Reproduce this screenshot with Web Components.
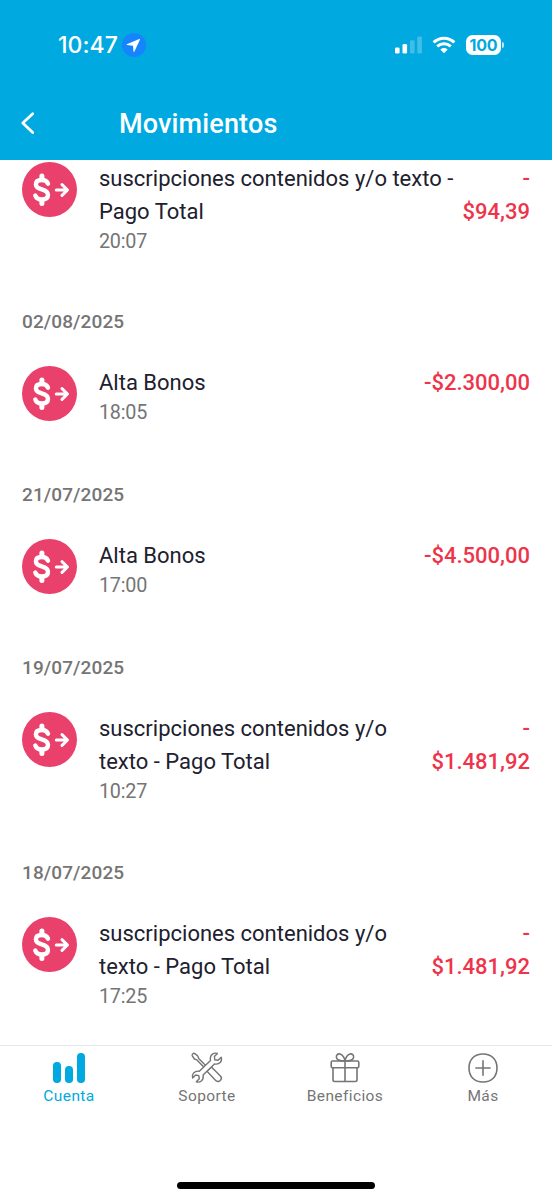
<!DOCTYPE html>
<html lang="es">
<head>
<meta charset="utf-8">
<title>Movimientos</title>
<style>
html,body{margin:0;height:100%;background:#fff}
body{font-family:Roboto,"Liberation Sans",sans-serif}
</style>
</head>
<body>
<app-screen></app-screen>
<script>
const define = (name, html) => customElements.define(name, class extends HTMLElement {
  constructor() {
    super();
    this.attachShadow({mode: 'open'}).innerHTML = html;
  }
});

define('status-bar', `
<style>
:host{display:flex;align-items:center;height:90px;padding:0 48px 0 58px;box-sizing:border-box;color:#fff}
.time{font:500 23px/30px Inter,sans-serif;letter-spacing:.05px;width:64px;white-space:nowrap}
.sp{flex:1}
svg{display:block;flex:none}
.batt{display:flex;align-items:center;margin-left:10px}
.level{width:35px;height:20px;border-radius:6.5px;background:#fff;color:#00a9e0;font:700 16px/20px Inter,sans-serif;letter-spacing:-.2px;text-align:center}
.cap{width:2px;height:6px;border-radius:0 2px 2px 0;background:#b5e5f6;margin-left:1px}
</style>
<span class="time">10:47</span>
<svg width="24" height="24" viewBox="0 0 24 24"><circle cx="12" cy="12" r="12" fill="#1684fc"/><path d="M17.2 6 4.8 11.2q-.7.5.2.7l6 .8.5 5.9q.3.9.8.1L17.9 6.7q.2-.9-.7-.7Z" fill="#fff"/></svg>
<span class="sp"></span>
<svg width="28" height="18" viewBox="0 0 28 18" fill="#fff"><rect x="0" y="11.5" width="4.6" height="6" rx="1.3"/><rect x="7.5" y="8" width="4.6" height="9.5" rx="1.3"/><g opacity=".25"><rect x="15" y="4.3" width="4.6" height="13.2" rx="1.3"/><rect x="22.3" y=".5" width="4.6" height="17" rx="1.3"/></g></svg>
<svg style="margin-left:9px" width="24" height="18" viewBox="0 0 24 18" fill="none" stroke="#fff" stroke-width="3"><path d="M1.6 6.4Q6.2 2.2 12 2.2T22.4 6.4"/><path d="M5.2 10.3Q8.2 7.7 12 7.7T18.8 10.3"/><path d="M8.3 13.4Q12 10.6 15.7 13.4L12 17.2Z" fill="#fff" stroke="none"/></svg>
<div class="batt"><span class="level">100</span><span class="cap"></span></div>
`);

define('nav-header', `
<style>
:host{display:block;height:160px;background:#00a9e0;color:#fff;flex:none}
.bar{display:flex;align-items:center;height:66px;padding-left:20px}
h1{font:500 27px/34px Roboto,sans-serif;margin:1px 0 0 83px;letter-spacing:.15px}
svg{display:block}
</style>
<status-bar></status-bar>
<div class="bar"><svg width="16" height="24" viewBox="0 0 16 24" fill="none" stroke="#fff" stroke-width="2.8" stroke-linecap="round" stroke-linejoin="round"><path d="M12.7 2.8 2.8 12l9.9 9.6"/></svg><h1><slot></slot></h1></div>
`);

define('debit-icon', `
<style>:host{display:block;width:55px;height:55px;flex:none}svg{display:block}</style>
<svg width="55" height="55" viewBox="0 0 55 55" fill="none" stroke="#fff" stroke-linecap="round" stroke-linejoin="round"><circle cx="27.5" cy="27.5" r="27.5" fill="#e9416c" stroke="none"/><path stroke-width="4.4" d="M26 21.7Q24.400 18 19.900 18 13.900 18 13.900 22.200 13.900 25.700 19.700 27.300 26 29 26 32.800 26 37.500 19.900 37.500 14.700 37.500 13.300 33.500"/><path stroke-width="5" d="M19.900 14v3M19.900 38.500v3"/><path stroke-width="3" d="M34.300 28h11M40 22.600l5.500 5.400-5.500 5.400"/></svg>
`);

define('movement-row', `
<style>
:host{display:flex;align-items:flex-start;padding:0 22px;margin-bottom:55px}
.body{flex:1;margin-left:22px}
.title{font-size:22px;line-height:33px;color:#20202e}
.time{font-size:19.8px;line-height:26px;padding-top:1px;letter-spacing:-.25px;color:#757575}
.amount{font-weight:500;font-size:22px;line-height:33px;color:#ee344b;text-align:right;white-space:nowrap}
</style>
<debit-icon></debit-icon>
<div class="body"><div class="title"><slot></slot></div><div class="time"><slot name="time"></slot></div></div>
<div class="amount"><slot name="amount"></slot></div>
`);

define('day-label', `
<style>:host{display:block;padding:0 22px;height:24px;margin-bottom:32px;font:500 19px/24px Roboto,sans-serif;letter-spacing:.1px;color:#757575}</style><slot></slot>
`);

define('tab-item', `
<style>
:host{display:flex;flex-direction:column;align-items:center;flex:1;color:#757575;font:400 15.5px/20px Roboto,sans-serif;letter-spacing:.4px;padding-top:5px}
:host([active]){color:#00a9e0}
.icon{height:35px;display:flex;align-items:flex-start}
</style>
<div class="icon"><slot name="icon"></slot></div><span><slot></slot></span>
`);

define('tab-bar', `
<style>
:host{display:flex;flex-direction:column;height:155px;box-sizing:border-box;border-top:1px solid #e8e8e8;background:#fff;flex:none}
nav{display:flex;flex:1}
.home{width:198px;height:7px;border-radius:4px;background:#000;margin:0 auto 11px}
svg{display:block}
</style>
<nav>
<tab-item active><svg slot="icon" width="34" height="34" viewBox="0 0 34 34" fill="#00a9e0"><rect x="1" y="11" width="8" height="21" rx="3.8"/><rect x="13" y="15" width="8" height="17" rx="3.8"/><rect x="25" y="2" width="8" height="30" rx="3.8"/></svg>Cuenta</tab-item>
<tab-item><svg slot="icon" width="34" height="34" viewBox="0 0 34 34" fill="#fff" stroke="#757575" stroke-width="1.4" stroke-linejoin="round"><path d="M7.800 5 4.800 2.600Q3.800 2 3 2.800L2.500 3.300q-.6.700-.2 1.500L4.400 8l2.500.9 13 13.300 1.700-1.700L8.700 7.500Z"/><path d="m17 20.300 8.700 9.200q2.400 2 4.600 0 2.200-2.300.1-4.500l-9-9Z"/><path d="M9.300 20.300 20.500 9.600q-.8-4 1.700-6.200 2.300-1.900 5.200-1l-3 3.100.4 3.300 3.300.5 3.100-3.100q1 3-1 5.300-2.200 2.200-5.700 1.400L13.100 23.900q.7 3.700-1.500 5.800-2.300 2-5.300 1.100l3-3.100-.5-3.100-3.100-.6-3.100 3.100q-.9-3.100 1-5.200 2.200-2.200 5.700-1.600Z"/></svg>Soporte</tab-item>
<tab-item><svg slot="icon" width="34" height="34" viewBox="0 0 34 34" fill="none" stroke="#757575" stroke-width="1.6"><rect x="3.2" y="10" width="27.6" height="6.7" rx="1.4"/><path d="M5 16.8v12q0 1.7 1.7 1.7h20.6q1.7 0 1.7-1.7v-12M17 10v20.5M17 10q-7.500 0-8.500-3.300C7.800 4 10 2.500 12 3c3 1 4.500 4 5 7Zm0 0q7.500 0 8.500-3.300C26.200 4 24 2.500 22 3c-3 1-4.500 4-5 7Z"/></svg>Beneficios</tab-item>
<tab-item><svg slot="icon" width="34" height="34" viewBox="0 0 34 34" fill="none" stroke="#757575" stroke-width="1.6"><path d="M17 3C25.600 3 31 8.400 31 17s-5.400 14-14 14S3 25.600 3 17 8.400 3 17 3Z"/><path d="M9.300 17h15.400M17 9.300v15.400"/></svg>Más</tab-item>
</nav>
<div class="home"></div>
`);

define('app-screen', `
<style>
:host{display:flex;flex-direction:column;width:552px;height:1200px;overflow:hidden;background:#fff}
main{flex:1;min-height:0;overflow:hidden;padding-top:2px;box-sizing:border-box}
.short{margin-bottom:57px}
</style>
<nav-header>Movimientos</nav-header>
<main>
<movement-row>suscripciones contenidos y/o texto -<br>Pago Total<span slot="time">20:07</span><span slot="amount">-<br>$94,39</span></movement-row>
<day-label>02/08/2025</day-label>
<movement-row class="short">Alta Bonos<span slot="time">18:05</span><span slot="amount">-$2.300,00</span></movement-row>
<day-label>21/07/2025</day-label>
<movement-row class="short">Alta Bonos<span slot="time">17:00</span><span slot="amount">-$4.500,00</span></movement-row>
<day-label>19/07/2025</day-label>
<movement-row style="margin-bottom:56px">suscripciones contenidos y/o<br>texto - Pago Total<span slot="time">10:27</span><span slot="amount">-<br>$1.481,92</span></movement-row>
<day-label>18/07/2025</day-label>
<movement-row>suscripciones contenidos y/o<br>texto - Pago Total<span slot="time">17:25</span><span slot="amount">-<br>$1.481,92</span></movement-row>
</main>
<tab-bar></tab-bar>
`);
</script>
</body>
</html>
